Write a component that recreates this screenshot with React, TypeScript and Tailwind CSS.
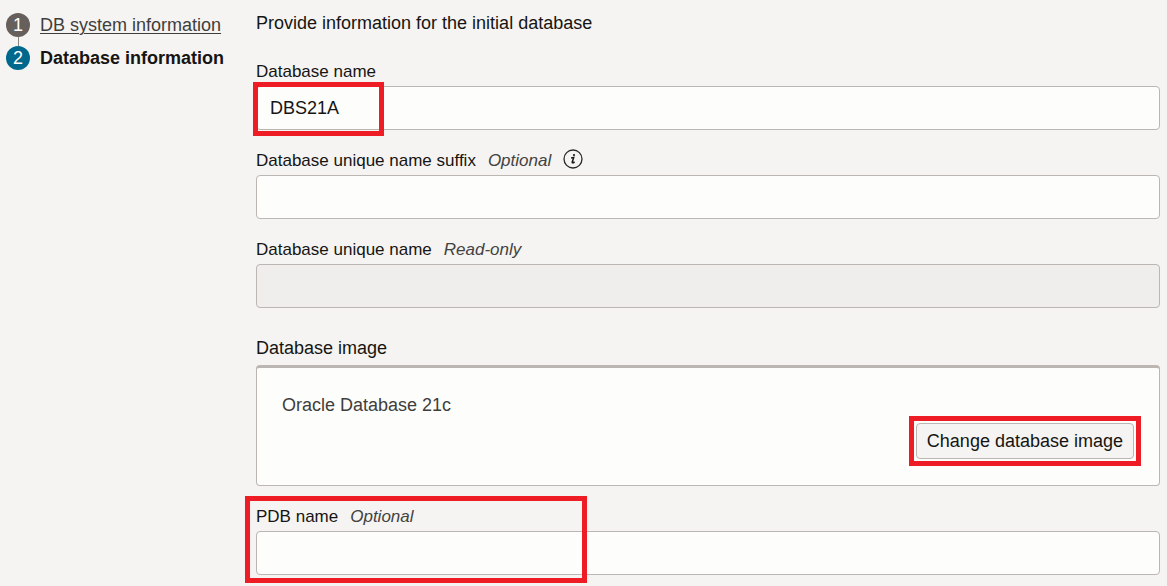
import type { ReactNode } from "react";

type FieldProps = {
  id: string;
  label: string;
  note?: string;
  value?: string;
  readOnly?: boolean;
  help?: ReactNode;
  highlight?: ReactNode;
};

function Field({ id, label, note, value, readOnly, help, highlight }: FieldProps) {
  return (
    <div className="relative">
      <div className="flex h-[30px] items-center">
        <label htmlFor={id} className="flex gap-3 pt-[2px] text-[17px] leading-6">
          <span>{label}</span>
          {note && <span className="text-[#444240] italic">{note}</span>}
        </label>
        {help}
      </div>
      <input
        id={id}
        type="text"
        defaultValue={value}
        readOnly={readOnly}
        className="block h-11 w-full rounded border border-[#bbb6b1] bg-[#fdfdfb] px-[13px] text-lg outline-none read-only:bg-[#efeeec]"
      />
      {highlight}
    </div>
  );
}

function InfoButton() {
  return (
    <button type="button" aria-label="About the unique name suffix" className="mb-[2px] ml-3">
      <svg viewBox="0 0 20 20" className="block size-5" fill="none">
        <circle cx="10" cy="10" r="9" stroke="#2b2826" strokeWidth="1.3" />
        <circle cx="11" cy="6" r="1.1" fill="#1c1a18" />
        <path d="M8.1 9.1 10.7 8.6 9.2 13.2Q9 14.6 11.6 13" stroke="#1c1a18" strokeWidth="1.5" />
      </svg>
    </button>
  );
}

export default function App() {
  return (
    <div className="flex min-h-screen bg-[#f5f4f2] pr-[7px] font-['Liberation_Sans',Arial,sans-serif] text-[#161513]">
      <nav aria-label="Steps" className="w-64 shrink-0 pt-[13px] pl-[6px]">
        <ol>
          <li className="flex gap-[10px]">
            <div className="flex flex-col items-center">
              <span className="flex size-6 items-center justify-center rounded-full bg-[#665f5b] text-lg leading-6 text-white">1</span>
              <span className="h-[9px] w-px bg-[#8b8580]" />
            </div>
            <a href="#system" className="text-lg leading-6 text-[#403e3c] underline decoration-1 underline-offset-2">
              DB system information
            </a>
          </li>
          <li className="flex gap-[10px]" aria-current="step">
            <span className="flex size-6 items-center justify-center rounded-full bg-[#00688c] text-lg leading-6 text-white">2</span>
            <span className="text-lg leading-6 font-bold">Database information</span>
          </li>
        </ol>
      </nav>

      <main className="min-w-0 flex-1 pt-[11px]">
        <h1 className="mb-[21px] text-lg leading-6">Provide information for the initial database</h1>
        <form className="flex flex-col gap-[15px]">
          <Field
            id="db-name"
            label="Database name"
            value="DBS21A"
            highlight={<div className="pointer-events-none absolute top-[26px] -left-[3px] h-[54px] w-[131px] border-5 border-[#ee1c24]" />}
          />
          <Field id="db-suffix" label="Database unique name suffix" note="Optional" help={<InfoButton />} />
          <Field id="db-unique" label="Database unique name" note="Read-only" readOnly />

          <section className="pt-2">
            <h2 className="text-lg leading-[34px]">Database image</h2>
            <div className="flex flex-col rounded border border-t-3 border-[#bbb6b1] bg-[#fdfdfb] px-[25px] pt-[25px] pb-[26px]">
              <p className="text-lg leading-6 text-[#403e3c]">Oracle Database 21c</p>
              <div className="relative mt-[6px] self-end">
                <button type="button" className="block h-9 rounded border border-[#bbb6b1] bg-[#f5f4f2] px-[10px] text-lg leading-6">
                  Change database image
                </button>
                <div className="pointer-events-none absolute -inset-[7px] border-5 border-[#ee1c24]" />
              </div>
            </div>
          </section>

          <Field
            id="pdb-name"
            label="PDB name"
            note="Optional"
            highlight={<div className="pointer-events-none absolute -top-[5px] -left-[11px] h-[87px] w-[342px] border-5 border-[#ee1c24]" />}
          />
        </form>
      </main>
    </div>
  );
}
